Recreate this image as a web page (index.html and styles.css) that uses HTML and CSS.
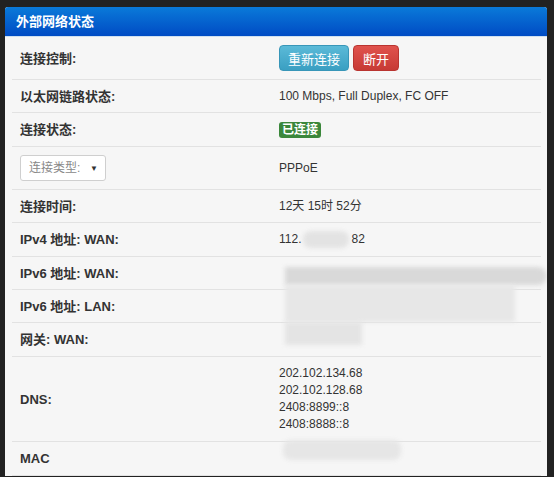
FILE: index.html
```html
<!DOCTYPE html>
<html lang="zh-CN">

<head>
    <meta charset="UTF-8">
    <meta name="viewport" content="width=device-width, initial-scale=1.0">
    <title>外部网络状态</title>
    <link rel="stylesheet" href="styles.css">
</head>

<body>
    <div class="panel">
        <div class="panel-heading">外部网络状态</div>
        <div class="panel-body">
            <div class="row row-tall">
                <div class="label">连接控制:</div>
                <div class="value">
                    <button class="btn btn-info">重新连接</button>
                    <button class="btn btn-danger">断开</button>
                </div>
            </div>
            <div class="row">
                <div class="label">以太网链路状态:</div>
                <div class="value">100 Mbps, Full Duplex, FC OFF</div>
            </div>
            <div class="row">
                <div class="label">连接状态:</div>
                <div class="value"><span class="badge">已连接</span></div>
            </div>
            <div class="row row-tall">
                <div class="label">
                    <div class="select">
                        <span class="select-text">连接类型:</span>
                        <span class="select-arrow">▼</span>
                    </div>
                </div>
                <div class="value">PPPoE</div>
            </div>
            <div class="row">
                <div class="label">连接时间:</div>
                <div class="value">12天 15时 52分</div>
            </div>
            <div class="row">
                <div class="label">IPv4 地址: WAN:</div>
                <div class="value">112.<span class="mask"></span>82</div>
            </div>
            <div class="row">
                <div class="label">IPv6 地址: WAN:</div>
                <div class="value"></div>
            </div>
            <div class="row">
                <div class="label">IPv6 地址: LAN:</div>
                <div class="value"></div>
            </div>
            <div class="row">
                <div class="label">网关: WAN:</div>
                <div class="value"></div>
            </div>
            <div class="row">
                <div class="label">DNS:</div>
                <div class="value value-list">
                    202.102.134.68<br>
                    202.102.128.68<br>
                    2408:8899::8<br>
                    2408:8888::8
                </div>
            </div>
            <div class="row">
                <div class="label">MAC</div>
                <div class="value"><span class="mask mask-mac"></span></div>
            </div>

            <!-- 打码区域 -->
            <div class="blur blur-1"></div>
            <div class="blur blur-2"></div>
            <div class="blur blur-3"></div>
        </div>
    </div>
</body>

</html>
```

FILE: styles.css
```css
body {
    margin: 0;
    background: #222;
    font-family: "Liberation Sans", "Noto Sans CJK SC", sans-serif;
    color: #333;
}

.panel {
    margin: 7px 0 0 5px;
    width: 542px;
    background: #f6f6f6;
    border-radius: 3px 3px 0 0;
    overflow: hidden;
}

.panel-heading {
    height: 29px;
    line-height: 29px;
    padding: 0 11px;
    color: white;
    font-size: 13px;
    font-weight: bold;
    background: linear-gradient(to bottom, #0a7ad9, #004bc4);
    border-bottom: 1px solid #cfe0f0;
}

.panel-body {
    position: relative;
    padding: 0 6px 0 7px;
}

.row {
    display: grid;
    grid-template-columns: 259px 1fr;
    align-items: center;
    height: 33px;
    box-sizing: border-box;
    padding: 0 0 0 8px;
    border-bottom: 1px solid #e2e2e2;
    line-height: 17px;
}

.row-tall {
    height: 43px;
}

.row:nth-child(3),
.row:nth-child(6),
.row:nth-child(9),
.row:nth-child(11) {
    height: 34px;
}

.row:nth-child(10) {
    height: 85px;
}

.label {
    font-size: 13px;
    font-weight: bold;
}

.value {
    font-size: 12px;
    display: flex;
    align-items: center;
    gap: 4px;
}

.value-list {
    display: block;
}

.btn {
    height: 26px;
    padding: 0;
    font-family: inherit;
    font-size: 13px;
    color: white;
    white-space: nowrap;
    border-radius: 4px;
    cursor: pointer;
}

.btn-info {
    width: 70px;
    background: linear-gradient(to bottom, #5bbad8, #3a9fc2);
    border: 1px solid #3896b8;
}

.btn-danger {
    width: 46px;
    background: linear-gradient(to bottom, #e0524d, #c73a35);
    border: 1px solid #b93430;
}

.badge {
    display: inline-block;
    padding: 0 3px;
    font-size: 12px;
    font-weight: bold;
    line-height: 16px;
    color: white;
    background: #3b873b;
    border-radius: 3px;
}

.select {
    display: flex;
    align-items: center;
    justify-content: space-between;
    width: 86px;
    height: 26px;
    box-sizing: border-box;
    padding: 0 7px 0 8px;
    background: white;
    border: 1px solid #cfcfcf;
    border-radius: 3px;
}

.select-text {
    font-size: 12px;
    font-weight: normal;
    color: #888;
}

.select-arrow {
    font-size: 8px;
    color: #333;
}

.mask {
    display: inline-block;
    width: 46px;
    height: 17px;
    margin: 0 -2px;
    background: #e3e3e3;
    border-radius: 8px;
    filter: blur(2px);
}

.mask-mac {
    width: 118px;
    height: 20px;
    margin: 0 0 0 4px;
    background: #e6e6e6;
    transform: translateY(-9px);
}

.blur {
    position: absolute;
    filter: blur(2px);
}

.blur-1 {
    left: 280px;
    top: 230px;
    width: 262px;
    height: 18px;
    background: #d9d9d9;
    border-radius: 0 10px 10px 0;
}

.blur-2 {
    left: 280px;
    top: 248px;
    width: 230px;
    height: 37px;
    background: #e7e7e7;
}

.blur-3 {
    left: 280px;
    top: 285px;
    width: 77px;
    height: 23px;
    background: #e4e4e4;
}
```
